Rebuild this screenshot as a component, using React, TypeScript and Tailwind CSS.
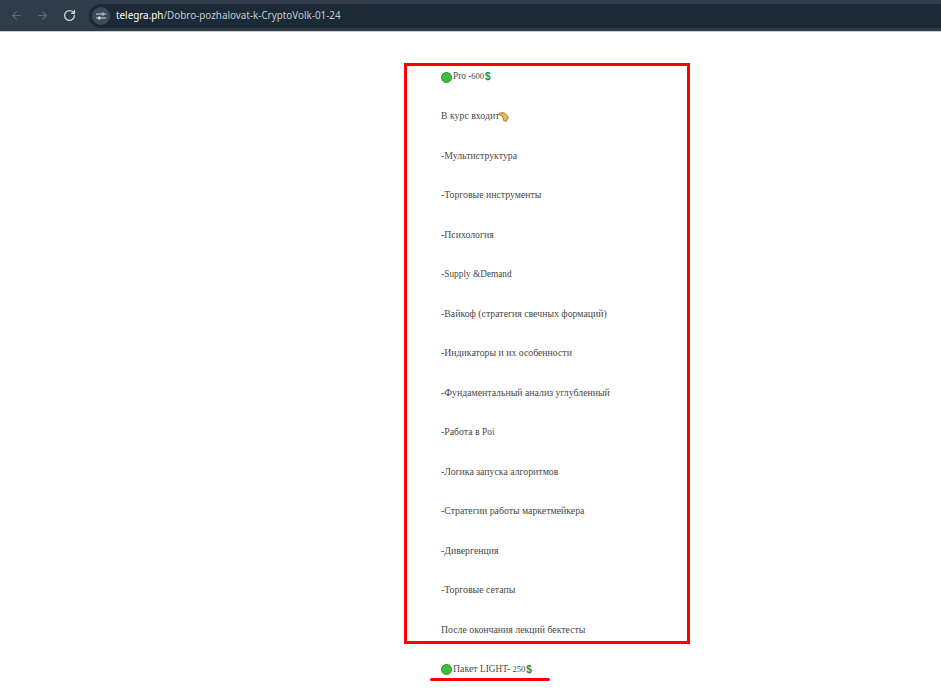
import React from 'react';
import { ArrowLeft, ArrowRight, RotateCw } from 'lucide-react';

const Latin = ({ children }: { children: React.ReactNode }) => (
  <span className="text-[9.3px]">{children}</span>
);

const rows: React.ReactNode[] = [
  '-Мультиструктура',
  '-Торговые инструменты',
  '-Психология',
  <>-<Latin>Supply &amp;Demand</Latin></>,
  '-Вайкоф (стратегия свечных формаций)',
  '-Индикаторы и их особенности',
  '-Фундаментальный анализ углубленный',
  <>-Работа в <Latin>Poi</Latin></>,
  '-Логика запуска алгоритмов',
  '-Стратегии работы маркетмейкера',
  '-Дивергенция',
  '-Торговые сетапы',
  'После окончания лекций бектесты',
];

const Row = ({ children }: { children: React.ReactNode }) => (
  <div className="h-[39.5px] flex items-center whitespace-nowrap">{children}</div>
);

const Circle = () => <span className="w-[11px] h-[11px] rounded-full bg-[#3cc03c] border border-[#2c8f2c] mr-px shrink-0" />;

const Dollar = () => (
  <span className="ml-px text-[#1f8a3a] font-bold text-[10px] leading-none font-['Liberation_Sans',sans-serif]">$</span>
);

const Hand = () => (
  <svg width="10" height="10" viewBox="0 0 10 10" className="shrink-0">
    <path d="M0.7 1 L5 0.7 L9.4 5 L7.2 9.4 L4.6 8.6 L3.4 4.2 L0.8 3 Z" fill="#f0b93a" stroke="#8a6a2a" strokeWidth="0.8" />
  </svg>
);

export default function App() {
  return (
    <div className="w-[941px] h-[692px] overflow-hidden bg-white relative font-['Liberation_Serif',serif] text-[9.8px] text-[#484848]">
      <div className="h-[32px] bg-[#2f3c4a] border-b border-[#c9ccd0] flex items-center pl-[10px]">
        <ArrowLeft size={13} className="text-[#5f6b78]" />
        <ArrowRight size={13} className="text-[#5f6b78] ml-[13px]" />
        <RotateCw size={13} strokeWidth={2.5} className="text-[#cdd3da] ml-[14px]" />
        <div className="ml-[13px] flex-1 h-[24px] rounded-l-full bg-[#1b2a36] flex items-center pl-[3px]">
          <div className="w-[18px] h-[18px] rounded-full bg-[#3d4a57] flex items-center justify-center">
            <svg width="10" height="8" viewBox="0 0 10 8" fill="none" stroke="#d5dae0" strokeWidth="1">
              <path d="M0 2h5M8.5 2h1.5M0 6h1.5M5 6h5" />
              <circle cx="6.8" cy="2" r="1.2" />
              <circle cx="3.2" cy="6" r="1.2" fill="#d5dae0" />
            </svg>
          </div>
          <span className="ml-[6px] text-[9.85px] font-['Noto_Sans',sans-serif] text-[#c3cad2]">
            <span className="text-white">telegra.ph</span>/Dobro-pozhalovat-k-CryptoVolk-01-24
          </span>
        </div>
      </div>
      <div className="pl-[441px] pt-[25.5px]">
        <Row><Circle /><Latin>Pro -<span className="text-[8.5px]">600</span></Latin><Dollar /></Row>
        <Row><span>В курс входит</span><Hand /></Row>
        {rows.map((row, i) => <Row key={i}><span>{row}</span></Row>)}
        <Row><Circle /><span>Пакет <Latin>LIGHT- <span className="text-[8.5px]">250</span></Latin></span><Dollar /></Row>
      </div>
      <div className="absolute left-[404px] top-[63px] w-[286px] h-[581px] border-[3px] border-[#ff0000]" />
      <div className="absolute left-[430px] top-[678px] w-[120px] h-[3px] rounded-full bg-[#ff0000]" />
    </div>
  );
}
